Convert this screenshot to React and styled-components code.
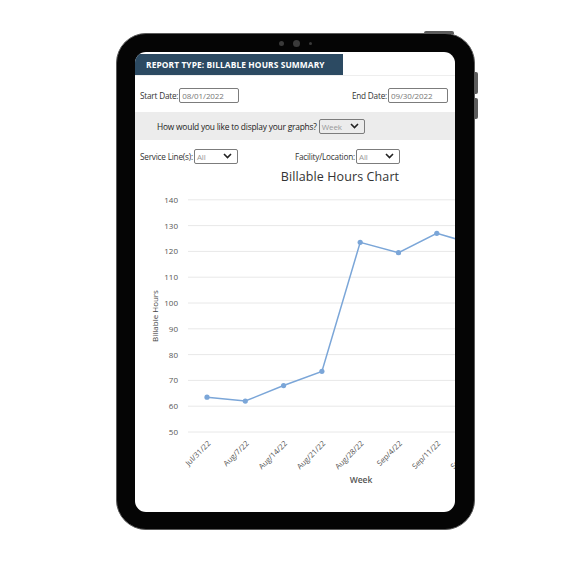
import React from "react";
import styled, { createGlobalStyle } from "styled-components";

const Global = createGlobalStyle`
  html, body {
    margin: 0;
    padding: 0;
    background: #fff;
  }
  body {
    font-family: "Open Sans", "Noto Sans", sans-serif;
  }
`;

const Page = styled.div`
  width: 563px;
  height: 563px;
  padding: 33px 0 0 116px;
  box-sizing: border-box;
`;

const Tablet = styled.div`
  position: relative;
  width: 359px;
  height: 497px;
  box-sizing: border-box;
  padding: 18px 19px 17px 18px;
  background: #050505;
  border: 1px solid #5a5a5a;
  border-radius: 30px;
  display: flex;
`;

const SideButton = styled.div`
  position: absolute;
  right: -4px;
  top: ${(p) => p.top}px;
  width: 3px;
  height: ${(p) => p.h}px;
  background: #5c5c5c;
  border-radius: 0 2px 2px 0;
`;

const TopButton = styled.div`
  position: absolute;
  top: -3px;
  right: 20px;
  width: 30px;
  height: 3px;
  background: #5c5c5c;
  border-radius: 2px 2px 0 0;
`;

const Camera = styled.div`
  position: absolute;
  top: 6px;
  left: 0;
  right: 0;
  display: flex;
  justify-content: center;
  align-items: center;
  gap: 9px;
`;

const Dot = styled.span`
  width: ${(p) => p.size}px;
  height: ${(p) => p.size}px;
  border-radius: 50%;
  background: #3a3a3a;
`;

const Screen = styled.div`
  flex: 1;
  background: #fff;
  border-radius: 11px;
  overflow: hidden;
  display: flex;
  flex-direction: column;
`;

const TabRow = styled.div`
  margin-top: 2px;
  display: flex;
  border-bottom: 1px solid #eeeeee;
`;

const Tab = styled.div`
  width: 208px;
  height: 21px;
  box-sizing: border-box;
  padding-left: 11px;
  background: #2c4a62;
  color: #fff;
  font-size: 8.4px;
  font-weight: 700;
  letter-spacing: 0.1px;
  display: flex;
  align-items: center;
`;

const Row = styled.div`
  display: flex;
  align-items: center;
  justify-content: ${(p) => p.justify || "flex-start"};
  gap: ${(p) => p.gap || 0}px;
  margin-top: ${(p) => p.mt}px;
  padding: 0 7px 0 5px;
  height: 16px;
`;

const Field = styled.div`
  display: flex;
  align-items: center;
  gap: 1px;
`;

const Label = styled.span`
  font-size: 8.2px;
  color: #333;
  letter-spacing: -0.2px;
  white-space: nowrap;
`;

const Input = styled.div`
  width: ${(p) => p.w}px;
  height: 15px;
  box-sizing: border-box;
  border: 1px solid #7c7c7c;
  border-radius: 2px;
  padding-left: 2px;
  font-size: 8px;
  color: #777;
  letter-spacing: -0.1px;
  display: flex;
  align-items: center;
`;

const Select = styled(Input)`
  justify-content: space-between;
  padding-right: 5px;
  color: #999;
`;

const Band = styled.div`
  margin-top: 9px;
  height: 28px;
  background: #ececec;
  display: flex;
  align-items: center;
  gap: 2px;
  padding-left: 22px;
`;

const BandLabel = styled(Label)`
  font-size: 8.4px;
  color: #222;
`;

const Chart = styled.div`
  width: 410px;
  display: flex;
  flex-direction: column;
`;

const Title = styled.div`
  margin-top: 4px;
  text-align: center;
  font-size: 12.5px;
  color: #333;
  letter-spacing: 0.1px;
`;

const Chevron = () => (
  <svg width="9" height="6" viewBox="0 0 9 6">
    <path d="M1 1 L4.5 4.5 L8 1" fill="none" stroke="#222" strokeWidth="1.6" />
  </svg>
);

const points = [
  ["Jul/31/22", 63.5],
  ["Aug/7/22", 62],
  ["Aug/14/22", 68],
  ["Aug/21/22", 73.5],
  ["Aug/28/22", 123.5],
  ["Sep/4/22", 119.5],
  ["Sep/11/22", 127],
  ["Sep/18/22", 122.7],
];

const ticks = [140, 130, 120, 110, 100, 90, 80, 70, 60, 50];
const yOf = (v) => 247 - (v - 50) * 2.58;
const xOf = (i) => 72 + i * 38.3;

const LineChart = () => (
  <svg width="410" height="310" viewBox="0 0 410 310">
    {ticks.map((t) => (
      <g key={t}>
        <line x1="53" x2="410" y1={yOf(t)} y2={yOf(t)} stroke="#e8e8e8" strokeWidth="1" />
        <text x="43" y={yOf(t) + 3} fontSize="8" fill="#555" textAnchor="end" fontFamily="Open Sans">
          {t}
        </text>
      </g>
    ))}
    <text
      transform="translate(23 131) rotate(-90)"
      fontSize="8"
      fill="#444"
      textAnchor="middle"
      fontFamily="Open Sans"
    >
      Billable Hours
    </text>
    <polyline
      points={points.map(([, v], i) => `${xOf(i)},${yOf(v)}`).join(" ")}
      fill="none"
      stroke="#7ba6d8"
      strokeWidth="1.5"
    />
    {points.map(([l, v], i) => (
      <g key={l}>
        <circle cx={xOf(i)} cy={yOf(v)} r="2.6" fill="#7ba6d8" />
        <text
          transform={`translate(${xOf(i) + 4} ${259}) rotate(-45)`}
          fontSize="7.6"
          fill="#555"
          textAnchor="end"
          fontFamily="Open Sans"
        >
          {l}
        </text>
      </g>
    ))}
    <text x="226" y="298" fontSize="8.5" fill="#555" textAnchor="middle" fontFamily="Open Sans" fontWeight="600">
      Week
    </text>
  </svg>
);

export default function App() {
  return (
    <>
      <Global />
      <Page>
        <Tablet>
          <TopButton />
          <SideButton top={38} h={22} />
          <SideButton top={64} h={21} />
          <Camera>
            <Dot size={5} />
            <Dot size={7} />
            <Dot size={3} />
          </Camera>
          <Screen>
            <TabRow>
              <Tab>REPORT TYPE: BILLABLE HOURS SUMMARY</Tab>
            </TabRow>
            <Row justify="space-between" mt={11}>
              <Field>
                <Label>Start Date:</Label>
                <Input w={60}>08/01/2022</Input>
              </Field>
              <Field>
                <Label>End Date:</Label>
                <Input w={60}>09/30/2022</Input>
              </Field>
            </Row>
            <Band>
              <BandLabel>How would you like to display your graphs?</BandLabel>
              <Select w={46}>
                Week
                <Chevron />
              </Select>
            </Band>
            <Row mt={8} gap={57}>
              <Field>
                <Label>Service Line(s):</Label>
                <Select w={44}>
                  All
                  <Chevron />
                </Select>
              </Field>
              <Field>
                <Label>Facility/Location:</Label>
                <Select w={44}>
                  All
                  <Chevron />
                </Select>
              </Field>
            </Row>
            <Chart>
              <Title>Billable Hours Chart</Title>
              <LineChart />
            </Chart>
          </Screen>
        </Tablet>
      </Page>
    </>
  );
}
